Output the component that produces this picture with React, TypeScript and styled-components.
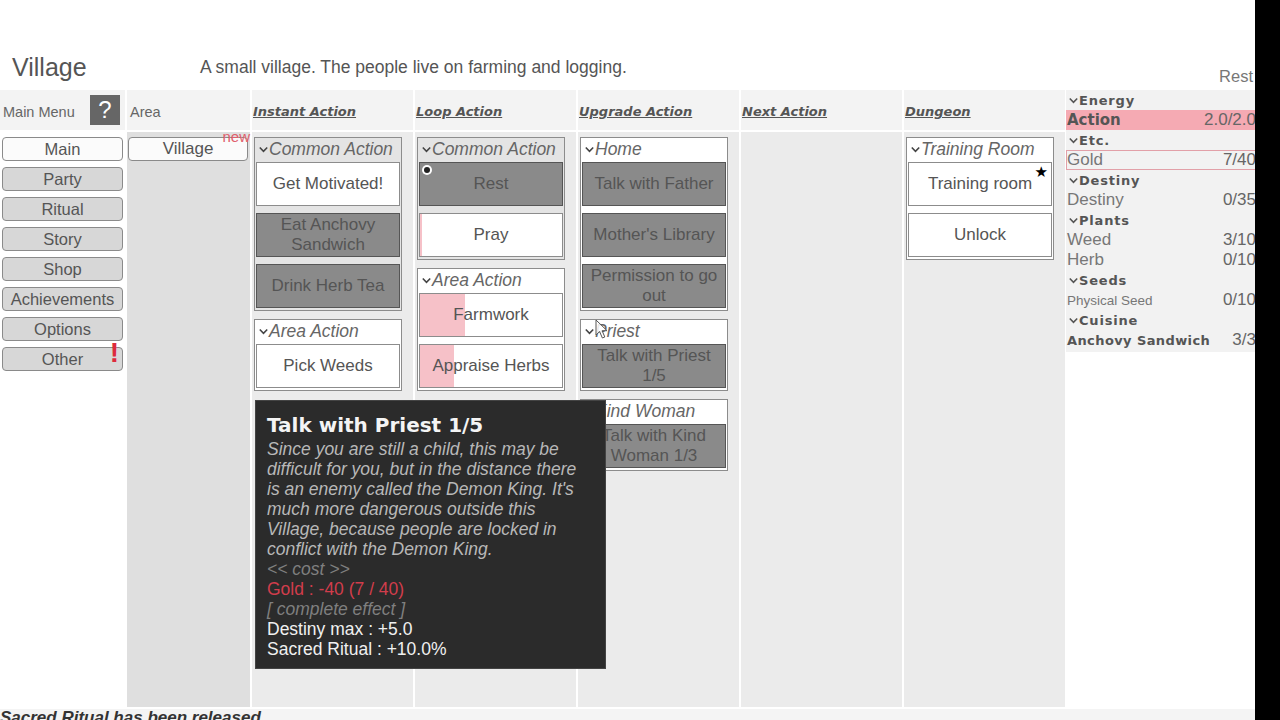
import React from "react";
import styled, { createGlobalStyle } from "styled-components";

const GlobalStyle = createGlobalStyle`
  html, body {
    margin: 0;
    padding: 0;
    background: #fff;
  }
  body {
    font-family: "Liberation Sans", Arial, sans-serif;
    color: #555;
  }
  * {
    box-sizing: border-box;
  }
`;

type Tone = "light" | "dark";

type ActionItem = {
  label: string;
  tone: Tone;
  progress?: number;
  dot?: boolean;
  star?: boolean;
};

type ActionGroup = {
  title: string;
  gray?: boolean;
  items: ActionItem[];
};

const instantGroups: ActionGroup[] = [
  {
    title: "Common Action",
    gray: true,
    items: [
      { label: "Get Motivated!", tone: "light" },
      { label: "Eat Anchovy Sandwich", tone: "dark" },
      { label: "Drink Herb Tea", tone: "dark" },
    ],
  },
  {
    title: "Area Action",
    items: [{ label: "Pick Weeds", tone: "light" }],
  },
];

const loopGroups: ActionGroup[] = [
  {
    title: "Common Action",
    gray: true,
    items: [
      { label: "Rest", tone: "dark", dot: true },
      { label: "Pray", tone: "light", progress: 1.5 },
    ],
  },
  {
    title: "Area Action",
    items: [
      { label: "Farmwork", tone: "light", progress: 32 },
      { label: "Appraise Herbs", tone: "light", progress: 24 },
    ],
  },
];

const upgradeGroups: ActionGroup[] = [
  {
    title: "Home",
    items: [
      { label: "Talk with Father", tone: "dark" },
      { label: "Mother's Library", tone: "dark" },
      { label: "Permission to go out", tone: "dark" },
    ],
  },
  {
    title: "Priest",
    items: [{ label: "Talk with Priest 1/5", tone: "dark" }],
  },
  {
    title: "Kind Woman",
    items: [{ label: "Talk with Kind Woman 1/3", tone: "dark" }],
  },
];

const dungeonGroups: ActionGroup[] = [
  {
    title: "Training Room",
    items: [
      { label: "Training room", tone: "light", star: true },
      { label: "Unlock", tone: "light" },
    ],
  },
];

const menuItems = [
  "Main",
  "Party",
  "Ritual",
  "Story",
  "Shop",
  "Achievements",
  "Options",
  "Other",
];

type ResEntry =
  | { kind: "head"; label: string }
  | {
      kind: "row";
      label: string;
      value: string;
      variant?: "action" | "gold" | "small" | "bold";
    };

const resources: ResEntry[] = [
  { kind: "head", label: "Energy" },
  { kind: "row", label: "Action", value: "2.0/2.0", variant: "action" },
  { kind: "head", label: "Etc." },
  { kind: "row", label: "Gold", value: "7/40", variant: "gold" },
  { kind: "head", label: "Destiny" },
  { kind: "row", label: "Destiny", value: "0/35" },
  { kind: "head", label: "Plants" },
  { kind: "row", label: "Weed", value: "3/10" },
  { kind: "row", label: "Herb", value: "0/10" },
  { kind: "head", label: "Seeds" },
  { kind: "row", label: "Physical Seed", value: "0/10", variant: "small" },
  { kind: "head", label: "Cuisine" },
  { kind: "row", label: "Anchovy Sandwich", value: "3/3", variant: "bold" },
];

const tooltipLines = [
  "Since you are still a child, this may be",
  "difficult for you, but in the distance there",
  "is an enemy called the Demon King. It's",
  "much more dangerous outside this",
  "Village, because people are locked in",
  "conflict with the Demon King.",
];

function Chevron({ color = "#555" }: { color?: string }) {
  return (
    <svg width="9" height="7" viewBox="0 0 9 7">
      <polyline
        points="0.8,1.5 4.5,5.3 8.2,1.5"
        fill="none"
        stroke={color}
        strokeWidth="1.6"
      />
    </svg>
  );
}

function Cursor() {
  return (
    <svg width="14" height="21" viewBox="0 0 14 21">
      <path
        d="M1 1 L1 16 L4.6 12.6 L7.4 19 L9.8 18 L7.1 11.7 L12 11.7 Z"
        fill="rgba(255,255,255,0.85)"
        stroke="#555"
        strokeWidth="1"
        strokeLinejoin="round"
      />
    </svg>
  );
}

function GroupBox({ group }: { group: ActionGroup }) {
  return (
    <Group $gray={group.gray}>
      <GroupHeader>
        <Chevron color="#444" />
        <span>{group.title}</span>
      </GroupHeader>
      {group.items.map((item) => (
        <ActionButton
          key={item.label}
          $tone={item.tone}
          $progress={item.progress ?? 0}
        >
          {item.dot && <RunDot />}
          {item.star && <Star>★</Star>}
          {item.label}
        </ActionButton>
      ))}
    </Group>
  );
}

function ActionColumn({
  title,
  groups,
}: {
  title: string;
  groups: ActionGroup[];
}) {
  return (
    <Column $width={161}>
      <ColumnHead>
        <ColumnTitle>{title}</ColumnTitle>
      </ColumnHead>
      <ColumnBody $bg="#ebebeb">
        {groups.map((g) => (
          <GroupBox key={g.title} group={g} />
        ))}
      </ColumnBody>
    </Column>
  );
}

export default function App() {
  return (
    <>
      <GlobalStyle />
      <Page>
        <Main>
          <TopBar>
            <AreaTitle>Village</AreaTitle>
            <AreaDesc>
              A small village. The people live on farming and logging.
            </AreaDesc>
            <RestLabel>Rest</RestLabel>
          </TopBar>

          <Board>
            <Column $width={125}>
              <ColumnHead>
                <HeadLabel>Main Menu</HeadLabel>
                <HelpButton>?</HelpButton>
              </ColumnHead>
              <ColumnBody $bg="#fff">
                <MenuList>
                  {menuItems.map((m) => (
                    <MenuButton key={m} $active={m === "Main"}>
                      {m}
                      {m === "Other" && <Alert>!</Alert>}
                    </MenuButton>
                  ))}
                </MenuList>
              </ColumnBody>
            </Column>

            <Column $width={123}>
              <ColumnHead>
                <HeadLabel>Area</HeadLabel>
              </ColumnHead>
              <ColumnBody $bg="#dfdfdf">
                <AreaButton>
                  Village
                  <NewBadge>new</NewBadge>
                </AreaButton>
              </ColumnBody>
            </Column>

            <ActionColumn title="Instant Action" groups={instantGroups} />
            <ActionColumn title="Loop Action" groups={loopGroups} />
            <ActionColumn title="Upgrade Action" groups={upgradeGroups} />
            <ActionColumn title="Next Action" groups={[]} />
            <ActionColumn title="Dungeon" groups={dungeonGroups} />

            <ResourcePanel>
              {resources.map((r, i) =>
                r.kind === "head" ? (
                  <ResHeader key={i}>
                    <Chevron color="#555" />
                    <span>{r.label}</span>
                  </ResHeader>
                ) : (
                  <ResRow key={i} $variant={r.variant}>
                    <ResLabel $variant={r.variant}>{r.label}</ResLabel>
                    <ResValue>{r.value}</ResValue>
                  </ResRow>
                )
              )}
            </ResourcePanel>
          </Board>

          <LogBar>
            <LogText>Sacred Ritual has been released</LogText>
          </LogBar>
        </Main>
        <EdgeStrip />

        <Tooltip>
          <TipTitle>Talk with Priest 1/5</TipTitle>
          {tooltipLines.map((l) => (
            <TipDesc key={l}>{l}</TipDesc>
          ))}
          <TipMuted>&lt;&lt; cost &gt;&gt;</TipMuted>
          <TipCost>Gold : -40 (7 / 40)</TipCost>
          <TipMuted>[ complete effect ]</TipMuted>
          <TipLine>Destiny max : +5.0</TipLine>
          <TipLine>Sacred Ritual : +10.0%</TipLine>
        </Tooltip>

        <CursorSpot>
          <Cursor />
        </CursorSpot>
      </Page>
    </>
  );
}

const Page = styled.div`
  position: relative;
  display: flex;
  width: 1280px;
  height: 720px;
  overflow: hidden;
  background: #fff;
`;

const Main = styled.div`
  display: flex;
  flex-direction: column;
  width: 1255px;
  height: 720px;
  overflow: hidden;
`;

const EdgeStrip = styled.div`
  width: 25px;
  height: 720px;
  background: #000;
`;

const TopBar = styled.div`
  display: flex;
  align-items: flex-start;
  height: 90px;
  padding-top: 52px;
  flex-shrink: 0;
`;

const AreaTitle = styled.div`
  width: 200px;
  padding-left: 12px;
  font-size: 25px;
  line-height: 30px;
  color: #555;
`;

const AreaDesc = styled.div`
  font-size: 17.5px;
  line-height: 30px;
  color: #555;
`;

const RestLabel = styled.div`
  margin-left: auto;
  margin-top: 14px;
  padding-right: 2px;
  font-size: 16.5px;
  line-height: 20px;
  color: #777;
`;

const Board = styled.div`
  display: flex;
  gap: 2px;
  height: 617px;
  flex-shrink: 0;
`;

const Column = styled.div<{ $width: number }>`
  display: flex;
  flex-direction: column;
  width: ${(p) => p.$width}px;
  flex-shrink: 0;
`;

const ColumnHead = styled.div`
  display: flex;
  align-items: center;
  height: 40px;
  padding: 3px 0 0 1px;
  background: #f3f3f3;
`;

const ColumnTitle = styled.span`
  font-family: "DejaVu Sans", Verdana, sans-serif;
  font-size: 13px;
  font-weight: bold;
  font-style: italic;
  text-decoration: underline;
  color: #555;
`;

const HeadLabel = styled.span`
  font-size: 14.5px;
  color: #666;
  padding-left: 2px;
`;

const HelpButton = styled.div`
  display: flex;
  align-items: center;
  justify-content: center;
  width: 30px;
  height: 30px;
  margin-left: auto;
  margin-right: 5px;
  margin-top: -3px;
  background: #666;
  color: #fff;
  font-size: 24px;
`;

const ColumnBody = styled.div<{ $bg: string }>`
  flex: 1;
  margin-top: 2px;
  padding: 5px 0 0 2px;
  background: ${(p) => p.$bg};
  display: flex;
  flex-direction: column;
  gap: 8px;
`;

const MenuList = styled.div`
  display: flex;
  flex-direction: column;
  gap: 6px;
`;

const MenuButton = styled.div<{ $active?: boolean }>`
  position: relative;
  width: 121px;
  height: 24px;
  display: flex;
  align-items: center;
  justify-content: center;
  border: 1px solid #8a8a8a;
  border-radius: 4px;
  background: ${(p) => (p.$active ? "#fbfbfb" : "#d7d7d7")};
  font-size: 16.5px;
  color: #555;
`;

const Alert = styled.span`
  position: absolute;
  right: 3px;
  top: -9px;
  font-size: 28px;
  font-weight: bold;
  line-height: 28px;
  color: #dd2a3c;
`;

const AreaButton = styled.div`
  position: relative;
  width: 120px;
  height: 24px;
  margin-left: -1px;
  display: flex;
  align-items: center;
  justify-content: center;
  border: 1px solid #8a8a8a;
  border-radius: 4px;
  background: #fbfbfb;
  font-size: 17px;
  color: #555;
`;

const NewBadge = styled.span`
  position: absolute;
  right: -3px;
  top: -9px;
  font-size: 15px;
  line-height: 16px;
  color: #e0606c;
`;

const Group = styled.div<{ $gray?: boolean }>`
  width: 148px;
  display: flex;
  flex-direction: column;
  gap: 7px;
  padding: 0 1px 2px 1px;
  border: 1px solid #8c8c8c;
  background: ${(p) => (p.$gray ? "#e4e4e4" : "#fff")};
`;

const GroupHeader = styled.div`
  display: flex;
  align-items: center;
  gap: 1px;
  height: 23px;
  margin-bottom: -6px;
  padding-left: 3px;
  font-size: 17.5px;
  font-style: italic;
  color: #666;
  white-space: nowrap;
  overflow: hidden;
`;

const ActionButton = styled.div<{ $tone: Tone; $progress: number }>`
  position: relative;
  height: 44px;
  display: flex;
  align-items: center;
  justify-content: center;
  padding: 0 4px;
  text-align: center;
  font-size: 17px;
  line-height: 20px;
  color: #555;
  border: 1px solid ${(p) => (p.$tone === "dark" ? "#555" : "#8c8c8c")};
  background: ${(p) =>
    p.$tone === "dark"
      ? "#8a8a8a"
      : `linear-gradient(to right, #f6c1c8 ${p.$progress}%, #fff ${p.$progress}%)`};
`;

const RunDot = styled.span`
  position: absolute;
  left: 2px;
  top: 2px;
  width: 10px;
  height: 10px;
  border-radius: 50%;
  background: #fff;
  &::after {
    content: "";
    position: absolute;
    left: 2px;
    top: 2px;
    width: 6px;
    height: 6px;
    border-radius: 50%;
    background: #222;
  }
`;

const Star = styled.span`
  position: absolute;
  right: 3px;
  top: 0px;
  font-family: "DejaVu Sans", sans-serif;
  font-size: 15px;
  line-height: 18px;
  color: #000;
`;

const ResourcePanel = styled.div`
  width: 192px;
  flex-shrink: 0;
  align-self: flex-start;
  margin-left: -1px;
  background: #f2f2f2;
  padding-bottom: 2px;
`;

const ResHeader = styled.div`
  display: flex;
  align-items: center;
  gap: 1px;
  height: 20px;
  padding-left: 3px;
  font-family: "DejaVu Sans", Verdana, sans-serif;
  font-size: 13px;
  font-weight: bold;
  letter-spacing: 0.8px;
  color: #555;
`;

const ResRow = styled.div<{ $variant?: string }>`
  display: flex;
  align-items: center;
  justify-content: space-between;
  height: 20px;
  padding-right: 1px;
  white-space: nowrap;
  background: ${(p) => (p.$variant === "action" ? "#f5aab3" : "transparent")};
  border: 1px solid
    ${(p) => (p.$variant === "gold" ? "#e2a0a8" : "transparent")};
`;

const ResLabel = styled.span<{ $variant?: string }>`
  font-family: ${(p) =>
    p.$variant === "action" || p.$variant === "bold"
      ? `"DejaVu Sans", Verdana, sans-serif`
      : `"Liberation Sans", Arial, sans-serif`};
  font-weight: ${(p) =>
    p.$variant === "action" || p.$variant === "bold" ? "bold" : "normal"};
  font-size: ${(p) =>
    p.$variant === "action"
      ? "15px"
      : p.$variant === "bold"
      ? "13px"
      : p.$variant === "small"
      ? "13.5px"
      : "17px"};
  letter-spacing: ${(p) => (p.$variant === "bold" ? "0.4px" : "0")};
  color: ${(p) =>
    p.$variant === "action" || p.$variant === "bold" ? "#555" : "#777"};
`;

const ResValue = styled.span`
  font-size: 17px;
  color: #666;
`;

const LogBar = styled.div`
  flex: 1;
  margin-top: 2px;
  background: #f4f4f4;
  overflow: hidden;
`;

const LogText = styled.div`
  font-size: 17px;
  font-weight: bold;
  font-style: italic;
  line-height: 18px;
  color: #333;
`;

const Tooltip = styled.div`
  position: absolute;
  left: 255px;
  top: 400px;
  width: 351px;
  height: 269px;
  padding: 11px 11px;
  background: #2b2b2b;
  border: 1px solid #444;
`;

const TipTitle = styled.div`
  font-family: "DejaVu Sans", Verdana, sans-serif;
  font-size: 20px;
  font-weight: bold;
  line-height: 27px;
  color: #f4f4f4;
`;

const TipDesc = styled.div`
  font-size: 17.5px;
  font-style: italic;
  line-height: 20px;
  color: #b8b8b8;
  white-space: nowrap;
`;

const TipMuted = styled.div`
  font-size: 17.5px;
  font-style: italic;
  line-height: 20px;
  color: #7f7f7f;
`;

const TipCost = styled.div`
  font-size: 17.5px;
  line-height: 20px;
  color: #d13d4b;
`;

const TipLine = styled.div`
  font-size: 17.5px;
  line-height: 20px;
  color: #f0f0f0;
`;

const CursorSpot = styled.div`
  position: absolute;
  left: 595px;
  top: 319px;
  width: 14px;
  height: 21px;
  pointer-events: none;
`;
